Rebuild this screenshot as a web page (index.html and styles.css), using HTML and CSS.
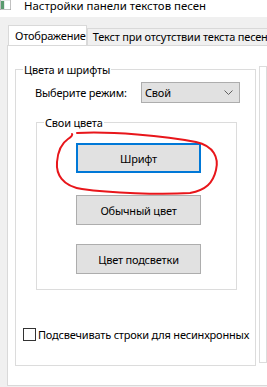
FILE: index.html
```html
<!DOCTYPE html>
<html lang="ru">
<head>
    <meta charset="UTF-8">
    <title>Настройки панели текстов песен</title>
    <link rel="stylesheet" href="styles.css">
</head>
<body>
    <div class="titlebar">
        <svg class="app-icon" width="11" height="12" viewBox="0 0 11 12">
            <rect x="0" y="0" width="11" height="12" fill="#e8e8e8" stroke="#9a9a9a"/>
            <rect x="1" y="3" width="3" height="8" fill="#5a9a6e"/>
            <rect x="5" y="3" width="5" height="8" fill="#ffffff"/>
        </svg>
        <span class="title">Настройки панели текстов песен</span>
    </div>

    <div class="tabs">
        <div class="tab tab-active">Отображение</div>
        <div class="tab">Текст при отсутствии текста песен</div>
    </div>

    <div class="panel">
        <div class="group group-main">
            <span class="group-title">Цвета и шрифты</span>

            <div class="mode-row">
                <span class="mode-label">Выберите режим:</span>
                <div class="combo">
                    <span>Свой</span>
                    <svg class="chevron" width="9" height="5" viewBox="0 0 9 5">
                        <path d="M0.5 0.5 L4.5 4.5 L8.5 0.5" fill="none" stroke="#606060" stroke-width="1"/>
                    </svg>
                </div>
            </div>

            <div class="group group-colors">
                <span class="group-title">Свои цвета</span>
                <button class="btn btn-focus btn-font">Шрифт</button>
                <button class="btn btn-normal">Обычный цвет</button>
                <button class="btn btn-highlight">Цвет подсветки</button>
            </div>

            <label class="check-row">
                <span class="checkbox"></span>
                <span>Подсвечивать строки для несинхронных</span>
            </label>
        </div>

        <div class="group group-side"></div>
    </div>

    <!-- red marker annotation over the button -->
    <svg class="marker" width="267" height="387" viewBox="0 0 267 387">
        <path d="M77 133 C 110 131, 165 136, 196 142 C 214 146, 219 158, 216 170 C 213 183, 206 190, 190 193 C 160 195, 110 193, 82 189 C 62 186, 56 174, 57 162 C 58 150, 62 143, 68 139 C 71 137, 73 135, 72 134"
              fill="none" stroke="#e8161b" stroke-width="2" stroke-linecap="round"/>
    </svg>
</body>
</html>
```

FILE: styles.css
```css
* {
    box-sizing: border-box;
}

body {
    margin: 0;
    width: 267px;
    height: 387px;
    overflow: hidden;
    position: relative;
    background: #f0f0f0;
    font-family: "Noto Sans", sans-serif;
    font-size: 11px;
    letter-spacing: -0.2px;
    color: #000;
}

.titlebar {
    height: 17px;
    background: #fff;
    display: flex;
    align-items: flex-start;
    overflow: hidden;
}

.app-icon {
    margin-top: -2px;
    flex-shrink: 0;
}

.title {
    margin-left: 13px;
    font-size: 11.4px;
    letter-spacing: 0;
    line-height: 11px;
    white-space: nowrap;
}

.tabs {
    display: flex;
    align-items: flex-end;
    height: 28px;
    padding-left: 8px;
    white-space: nowrap;
    overflow: hidden;
}

.tab {
    height: 17px;
    padding: 0 5px;
    line-height: 15px;
    border: 1px solid #d9d9d9;
    border-bottom: none;
    background: #f0f0f0;
}

.tab-active {
    position: relative;
    z-index: 1;
    width: 84px;
    height: 21px;
    margin-bottom: -1px;
    padding: 0 0 0 6px;
    line-height: 19px;
    background: #fff;
}

.panel {
    display: flex;
    align-items: flex-start;
    height: 341px;
    margin-left: 7px;
    padding-left: 7px;
    background: #fff;
    border: 1px solid #d9d9d9;
    border-right: none;
}

.group {
    border: 1px solid #dcdcdc;
}

.group-title {
    display: block;
    width: fit-content;
    margin: -8px 0 0 7px;
    padding: 0 1px;
    line-height: 15px;
    background: #fff;
}

.group-main {
    width: 241px;
    height: 297px;
    margin-top: 23px;
    flex-shrink: 0;
}

.group-side {
    flex: 1;
    height: 297px;
    margin-top: 20px;
    margin-left: 3px;
}

.mode-row {
    display: flex;
    align-items: center;
    margin-top: 5px;
    padding-left: 19px;
}

.mode-label {
    width: 106px;
}

.combo {
    display: flex;
    align-items: center;
    justify-content: space-between;
    width: 99px;
    height: 21px;
    padding: 0 6px 0 3px;
    background: #e1e1e1;
    border: 1px solid #adadad;
}

.group-colors {
    display: flex;
    flex-direction: column;
    width: 201px;
    height: 168px;
    margin: 19px 0 0 20px;
}

.btn {
    width: 125px;
    height: 30px;
    margin-left: 39px;
    padding: 0;
    font-family: inherit;
    font-size: inherit;
    letter-spacing: inherit;
    color: #000;
    background: #e1e1e1;
    border: 1px solid #adadad;
}

.btn-focus {
    border: 2px solid #0078d7;
}

.btn-font {
    margin-top: 13px;
}

.btn-normal {
    margin-top: 22px;
}

.btn-highlight {
    margin-top: 19px;
}

.check-row {
    display: flex;
    align-items: center;
    margin: 37px 0 0 7px;
    white-space: nowrap;
}

.checkbox {
    flex-shrink: 0;
    width: 13px;
    height: 13px;
    margin-right: 2px;
    border: 1px solid #333;
    background: #fff;
}

.marker {
    position: absolute;
    left: 0;
    top: 0;
    pointer-events: none;
}
```
